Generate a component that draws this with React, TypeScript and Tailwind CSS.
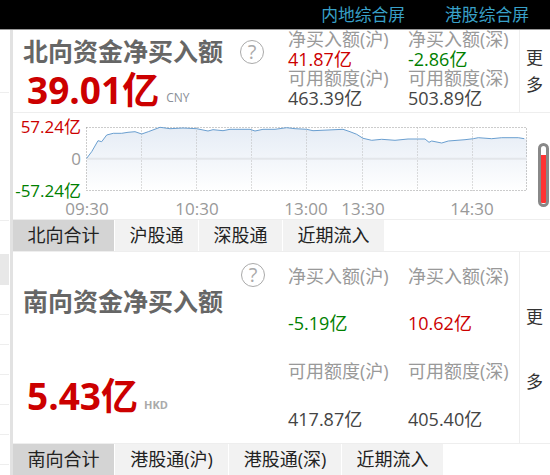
import React from "react";

const font = { fontFamily: '"Open Sans", "Noto Sans CJK SC", sans-serif' };

const linePoints =
  "86.7,158.3 91.7,151.7 98,140.7 101.7,141.7 106.7,135 113.3,133.3 121.7,133.3 128,132.3 135,131.7 141.7,134 148.3,131.7 160,127.3 170,128.7 183,128 196.7,128.7 208,131 213,129.7 223,130.7 230,129.3 250,129.3 255,131 263,129.3 275,129.3 286.7,127.7 295,128.7 306.7,129.3 313,130.7 328,130 343,129.3 350,131.7 356.7,134.3 363,138.3 371.7,140.3 381.7,139.3 395,140.3 408,139 425,139 429,142.3 431.7,141 441.7,143 448.3,141 465,139.7 473.3,138.7 478.3,137.7 491.7,138.7 501.7,137.7 518.3,137.7 524.3,138.7";

const gridX = [141.5, 196.5, 251.5, 306.5, 362.5, 417.5, 472.5];
const times = [
  { x: 87, t: "09:30" },
  { x: 197, t: "10:30" },
  { x: 306, t: "13:00" },
  { x: 363, t: "13:30" },
  { x: 472, t: "14:30" },
];

const Chart = () => {
  return (
    <svg viewBox="13 113 537 106" className="block h-[106px] w-[537px]" style={font}>
      <defs>
        <linearGradient id="area" x1="0" y1="0" x2="0" y2="1">
          <stop offset="0" stopColor="#e5ecf5" />
          <stop offset="1" stopColor="#ffffff" />
        </linearGradient>
      </defs>
      <polygon points={`86.7,191 ${linePoints} 527,138.7 527,191`} fill="url(#area)" />
      <rect x="86.5" y="127.5" width="440" height="63" fill="none" stroke="#999" strokeDasharray="1 2" />
      {gridX.map((x) => (
        <line key={x} x1={x} x2={x} y1="127.5" y2="191" stroke="#bbb" strokeDasharray="1 2" />
      ))}
      <line x1="87" x2="527" y1="158.7" y2="158.7" stroke="#e3e6ea" strokeWidth="2" />
      <polyline points={linePoints} fill="none" stroke="#6a9fd0" strokeWidth="1" />
      <text x="81" y="133" textAnchor="end" fontSize="17" fill="#cc0000">57.24亿</text>
      <text x="81" y="165" textAnchor="end" fontSize="17" fill="#999">0</text>
      <text x="81" y="197" textAnchor="end" fontSize="17" fill="#008000">-57.24亿</text>
      {times.map((i) => (
        <text key={i.t} x={i.x} y="215" textAnchor="middle" fontSize="17" fill="#999">{i.t}</text>
      ))}
    </svg>
  );
};

const Help = () => {
  return (
    <div className="flex h-[24px] w-[24px] items-center justify-center rounded-full border-[1.5px] border-[#aaa] text-[20px] leading-none text-[#aaa]">
      ?
    </div>
  );
};

const Tabs = ({ items }: { items: { label: string; w: string }[] }) => {
  return (
    <div className="flex h-[31px] gap-px">
      {items.map((item, i) => (
        <div
          key={item.label}
          className={`flex items-center justify-center text-[18px] text-[#222] ${item.w} ${i === 0 ? "bg-[#d4d4d4]" : "bg-[#f2f2f2]"}`}
        >
          {item.label}
        </div>
      ))}
    </div>
  );
};

const Metric = ({ text, color }: { text: string; color: string }) => {
  return <div className={`whitespace-nowrap text-[18px] ${color}`}>{text}</div>;
};

const Strip = () => {
  const rows = [30, 30, 30, 30, 30, 30];
  return (
    <div className="flex w-[9px] flex-col bg-white">
      <div className="h-[63px] border-b border-[#eee]" />
      <div className="h-[128px] border-b border-[#eee]" />
      <div className="h-[33px]" />
      <div className="h-[31px] bg-[#e8e8e8]" />
      <div className="h-[30px] border-b border-[#eee]" />
      {rows.map((r, i) => (
        <div key={i} className="h-[30px] border-b border-[#eee]" />
      ))}
    </div>
  );
};

const App = () => {
  return (
    <div className="h-[475px] w-[550px] overflow-hidden bg-white" style={font}>
      <div className="flex h-[30px] justify-end gap-[40px] border-b border-[#999] bg-black pr-[21px] pt-[3px] text-[16.8px] leading-[24px] text-[#38a0c8]">
        <span>内地综合屏</span>
        <span>港股综合屏</span>
      </div>
      <div className="flex">
        <Strip />
        <div className="w-[1px]" />
        <div className="w-[3px] bg-[#e2e2e2]" />
        <div className="relative w-[537px]">
          {/* 北向 */}
          <div className="flex h-[83px] border-b border-[#eee]">
            <div className="w-[275px] pl-[10px]">
              <div className="flex items-start pt-[8px]">
                <div className="text-[25px] font-bold leading-[26px] text-[#666]">北向资金净买入额</div>
                <div className="ml-[17px] mt-[2px]"><Help /></div>
              </div>
              <div className="flex items-end pl-[4px] pt-[4px]">
                <div className="text-[37px] font-bold leading-[44px] text-[#cc0000]">39.01亿</div>
                <div className="mb-[7px] ml-[7px] text-[12px] leading-[14px] text-[#8a8f98]">CNY</div>
              </div>
            </div>
            <div className="-mt-px grid w-[231px] grid-cols-[120px_111px] auto-rows-[19.7px] leading-[20px]">
              <Metric text="净买入额(沪)" color="text-[#999]" />
              <Metric text="净买入额(深)" color="text-[#999]" />
              <Metric text="41.87亿" color="text-[#cc0000]" />
              <Metric text="-2.86亿" color="text-[#008000]" />
              <Metric text="可用额度(沪)" color="text-[#999]" />
              <Metric text="可用额度(深)" color="text-[#999]" />
              <Metric text="463.39亿" color="text-[#444]" />
              <Metric text="503.89亿" color="text-[#444]" />
            </div>
            <div className="flex w-[31px] flex-col items-start gap-[8px] border-l border-[#eee] pl-[6px] pt-[18px] text-[17px] leading-[19px] text-[#333]">
              <span>更</span>
              <span>多</span>
            </div>
          </div>
          <div className="border-b border-[#eee]">
            <Chart />
          </div>
          <div className="border-b border-[#eee]">
            <Tabs
              items={[
                { label: "北向合计", w: "w-[101px]" },
                { label: "沪股通", w: "w-[83px]" },
                { label: "深股通", w: "w-[83px]" },
                { label: "近期流入", w: "w-[101px]" },
              ]}
            />
          </div>
          {/* 南向 */}
          <div className="flex h-[192px] border-b border-[#eee]">
            <div className="w-[275px] pl-[10px]">
              <div className="flex justify-end pr-[23px] pt-[11px]"><Help /></div>
              <div className="pt-px text-[25px] font-bold leading-[26px] text-[#666]">南向资金净买入额</div>
              <div className="flex items-end pl-[4px] pt-[60px]">
                <div className="text-[37px] font-bold leading-[44px] text-[#cc0000]">5.43亿</div>
                <div className="mb-[6px] ml-[6px] text-[11px] font-bold leading-[14px] text-[#aaa]">HKD</div>
              </div>
            </div>
            <div className="grid w-[231px] grid-cols-[120px_111px] auto-rows-[47.6px] items-center leading-[20px]">
              <Metric text="净买入额(沪)" color="text-[#999]" />
              <Metric text="净买入额(深)" color="text-[#999]" />
              <Metric text="-5.19亿" color="text-[#008000]" />
              <Metric text="10.62亿" color="text-[#cc0000]" />
              <Metric text="可用额度(沪)" color="text-[#999]" />
              <Metric text="可用额度(深)" color="text-[#999]" />
              <Metric text="417.87亿" color="text-[#444]" />
              <Metric text="405.40亿" color="text-[#444]" />
            </div>
            <div className="flex w-[31px] flex-col items-start gap-[46px] border-l border-[#eee] pl-[6px] pt-[55px] text-[17px] leading-[19px] text-[#333]">
              <span>更</span>
              <span>多</span>
            </div>
          </div>
          <Tabs
            items={[
              { label: "南向合计", w: "w-[101px]" },
              { label: "港股通(沪)", w: "w-[113px]" },
              { label: "港股通(深)", w: "w-[112px]" },
              { label: "近期流入", w: "w-[101px]" },
            ]}
          />
          {/* scrollbar over the chart */}
          <div className="absolute left-[525px] top-[113px] h-[64px] w-[11px] overflow-hidden rounded-full border-[3px] border-[#888] bg-white">
            <div className="mt-[9px] h-[48px] w-full bg-[#f33]" />
          </div>
        </div>
      </div>
    </div>
  );
};

export default App;
